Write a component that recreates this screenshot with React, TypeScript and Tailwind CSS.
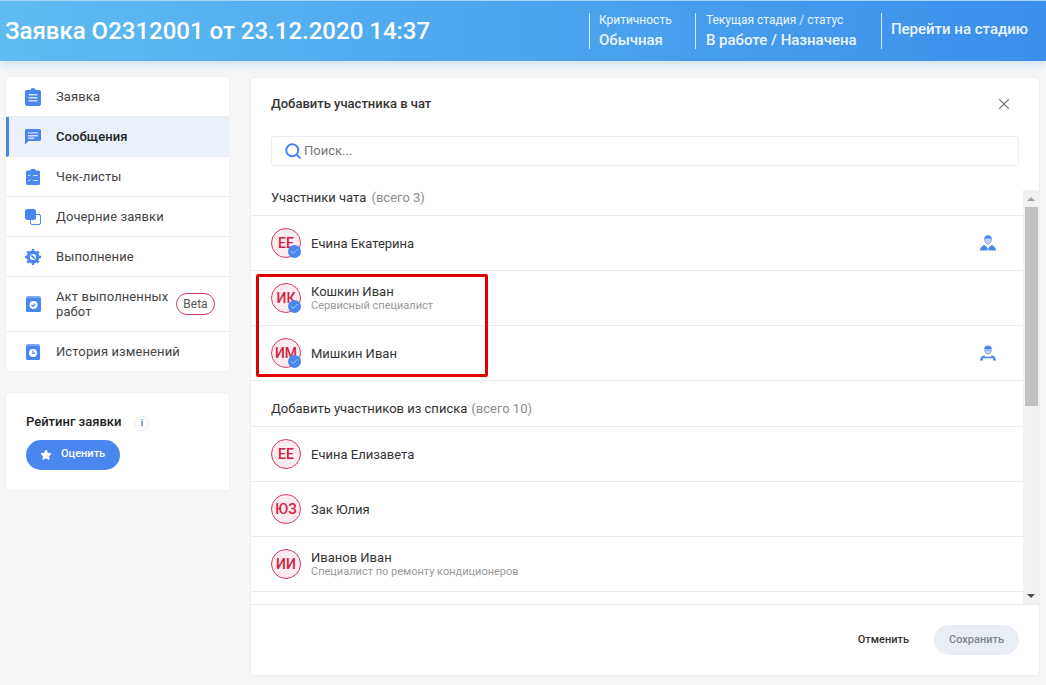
import React from 'react';
import { Search, X, Star, Check } from 'lucide-react';

const blue = '#4a86f0';

const IconClipboard = () => (
  <svg width="16" height="18" viewBox="0 0 16 18">
    <path fill="#4a86f0" d="M2 2h3.200a3 3 0 0 1 5.600 0H14a2 2 0 0 1 2 2v12a2 2 0 0 1-2 2H2a2 2 0 0 1-2-2V4a2 2 0 0 1 2-2z" />
    <path fill="#cfe0fb" d="M3.500 6h9v1.400h-9zM3.500 9h9v1.400h-9zM3.500 12h9v1.400h-9z" />
  </svg>
);
const IconChat = () => (
  <svg width="16" height="16" viewBox="0 0 16 16">
    <path fill="#4a86f0" d="M1.500 0h13A1.500 1.500 0 0 1 16 1.500v9a1.500 1.500 0 0 1-1.500 1.500H3.500L0 15.500v-14A1.500 1.500 0 0 1 1.500 0z" />
    <path fill="#cfe0fb" d="M3 3.200h10v1.400H3zM3 6h10v1.400H3zM3 8.600h6.500V10H3z" />
  </svg>
);
const IconChecklist = () => (
  <svg width="14" height="16" viewBox="0 0 14 16" className="mx-px">
    <path fill="#4a86f0" d="M1.500 1.500h3a2.500 2.500 0 0 1 5 0h3A1.500 1.500 0 0 1 14 3v11.500a1.500 1.500 0 0 1-1.500 1.500h-11A1.500 1.500 0 0 1 0 14.500V3a1.500 1.500 0 0 1 1.500-1.500z" />
    <path fill="none" stroke="#cfe0fb" strokeWidth="1" d="M2 6l1 1 1.600-1.800M7 6.500h5M2 11l1 1 1.600-1.800M7 11.500h5" />
  </svg>
);
const IconChild = () => (
  <svg width="16" height="16" viewBox="0 0 16 16">
    <rect x="5.500" y="5.500" width="10" height="10" rx="1.500" fill="none" stroke="#4a86f0" />
    <rect x="0" y="0" width="11" height="11" rx="2.500" fill="#4a86f0" />
  </svg>
);
const IconGear = () => (
  <svg width="16" height="16" viewBox="0 0 16 16">
    <circle cx="8" cy="8" r="4.800" fill="none" stroke="#4a86f0" strokeWidth="3.400" />
    <path stroke="#4a86f0" strokeWidth="2.400" d="M8 0v3M8 13v3M0 8h3M13 8h3M2.300 2.300l2.100 2.100M11.600 11.600l2.100 2.100M2.300 13.700l2.100-2.100M11.600 4.400l2.100-2.100" />
    <path stroke="#4a86f0" strokeWidth="1.800" d="M6.300 6.300l3.400 3.400" />
  </svg>
);
const IconAct = () => (
  <svg width="15" height="16" viewBox="0 0 15 16">
    <path fill="#7ba6f4" d="M2 0h11a2 2 0 0 1 2 2v3H0V2a2 2 0 0 1 2-2z" />
    <rect y="2" width="15" height="14" rx="1.500" fill="#4a86f0" />
    <circle cx="7.500" cy="9" r="4" fill="#fff" />
    <path fill="none" stroke="#4a86f0" strokeWidth="1.300" d="M5.600 9l1.400 1.400 2.400-2.600" />
  </svg>
);
const IconHistory = () => (
  <svg width="14" height="16" viewBox="0 0 14 16" className="mx-px">
    <path fill="#7ba6f4" d="M2 0h10a2 2 0 0 1 2 2v3H0V2a2 2 0 0 1 2-2z" />
    <rect y="2" width="14" height="14" rx="1.500" fill="#4a86f0" />
    <circle cx="7" cy="9" r="4" fill="#fff" />
    <path fill="none" stroke="#4a86f0" strokeWidth="1.200" d="M7 6.600V9.300h2" />
  </svg>
);
const IconManager = () => (
  <svg width="16" height="16" viewBox="0 0 16 16">
    <path fill="#4a86f0" d="M4.200 5C3.900 1.800 6 .3 8 .3s4.100 1.500 3.800 4.700c-1-1.500-2.100-2-3.800-2s-2.800.5-3.800 2z" />
    <path fill="#c3d7fa" stroke="#4a86f0" strokeWidth=".7" d="M4.800 4.600c0 2.700 1.400 4.300 3.200 4.300s3.200-1.600 3.200-4.300c-1-1-2-1.300-3.200-1.300s-2.200.3-3.200 1.300z" />
    <path fill="#4a86f0" d="M0 15.500c0-3.200 2-4.800 4.700-5.600L7.600 13v2.500zM16 15.500c0-3.200-2-4.800-4.700-5.600L8.400 13v2.500z" />
  </svg>
);
const IconWorker = () => (
  <svg width="16" height="16" viewBox="0 0 16 16">
    <path fill="#4a86f0" d="M4 4.200C4 1.800 6 .4 8 .4s4 1.400 4 3.800z" />
    <path fill="#c3d7fa" d="M3.600 4.200h8.800v.9H3.600z" />
    <path fill="#c3d7fa" stroke="#4a86f0" strokeWidth=".7" d="M4.800 5.200c0 2.200 1.400 3.700 3.200 3.700s3.200-1.500 3.200-3.700z" />
    <path fill="#4a86f0" d="M0 15.500c0-3 1.800-4.500 4.200-5.200L5 11.800h6l.8-1.500c2.400.7 4.200 2.200 4.200 5.200h-2.800v-2.200H2.800v2.200z" />
  </svg>
);

const nav = [
  { label: 'Заявка', icon: <IconClipboard /> },
  { label: 'Сообщения', icon: <IconChat />, active: true },
  { label: 'Чек-листы', icon: <IconChecklist /> },
  { label: 'Дочерние заявки', icon: <IconChild /> },
  { label: 'Выполнение', icon: <IconGear /> },
];

const Avatar = ({ text, checked }: { text: string; checked?: boolean }) => (
  <div className="relative w-[30px] h-[30px] shrink-0 rounded-full border border-[#d9395a] bg-[#fdecef] flex items-center justify-center pb-px text-[14px] font-medium leading-none text-[#d0213f]">
    {text}
    {checked && (
      <span className="absolute -right-[1px] -bottom-[1px] w-[13px] h-[13px] rounded-full bg-[#4a86f0] flex items-center justify-center">
        <Check size={9} strokeWidth={2} color="#dbe7fd" />
      </span>
    )}
  </div>
);

const Row = ({ initials, name, role, checked, icon }: { initials: string; name: string; role?: string; checked?: boolean; icon?: React.ReactNode }) => (
  <div className="h-[55px] shrink-0 border-b border-[#ececec] pl-5 pr-[27px] flex items-center">
    <Avatar text={initials} checked={checked} />
    <div className={`ml-[10px] flex-1 ${role ? '' : 'pt-px'}`}>
      <div className="text-[13px] leading-[15px] text-[#333]">{name}</div>
      {role && <div className="text-[11px] leading-[13px] text-[#9a9a9a]">{role}</div>}
    </div>
    {icon}
  </div>
);

export default function App() {
  return (
    <div className="w-[1046px] h-[685px] overflow-hidden bg-[#f7f7f7] font-['Roboto',sans-serif] text-[#333]">
      <header className="h-[61px] border-t border-[#a5d4f5] bg-gradient-to-r from-[#5fbbf1] to-[#3c8eeb] text-white flex items-center pl-[5px] pr-[18px] shadow-[0_4px_10px_rgba(130,190,235,0.35)]">
        <h1 className="flex-1 text-[24px] font-medium leading-none">Заявка О2312001 от 23.12.2020 14:37</h1>
        <div className="h-9 border-l border-white/80 pl-[9px] w-[106px]">
          <div className="text-[12px] leading-[14px] text-white/90">Критичность</div>
          <div className="text-[15px] leading-[18px] font-medium mt-[4px] text-white/90">Обычная</div>
        </div>
        <div className="h-9 border-l border-white/80 pl-[10px] w-[186px]">
          <div className="text-[12px] leading-[14px] text-white/90">Текущая стадия / статус</div>
          <div className="text-[15px] leading-[18px] font-medium mt-[4px] text-white/90">В работе / Назначена</div>
        </div>
        <div className="h-9 border-l border-white/80 pl-[9px] flex items-center">
          <span className="text-[15px] font-medium text-white/90 -mt-[3px]">Перейти на стадию</span>
        </div>
      </header>

      <div className="flex pt-4 pl-[6px] pr-[7px] gap-[22px]">
        <aside className="w-[223px] shrink-0">
          <nav className="bg-white rounded-[3px] shadow-[0_0_2px_rgba(0,0,0,0.08)]">
            {nav.map((item) => (
              <div
                key={item.label}
                className={`h-10 flex items-center border-b border-[#ececec] pl-[19px] ${item.active ? 'bg-[#eaf1fd] border-l-[3px] border-l-[#4a86f0] !pl-[16px] text-[#222]' : 'text-[#444]'}`}
              >
                <span className="w-4 flex justify-center">{item.icon}</span>
                <span className={`ml-[15px] text-[13px] tracking-[0.1px] ${item.active ? 'font-medium' : ''}`}>{item.label}</span>
              </div>
            ))}
            <div className="h-[55px] flex items-center border-b border-[#ececec] pl-[19px] text-[#444]">
              <span className="w-4 flex justify-center"><IconAct /></span>
              <span className="ml-[15px] w-[115px] text-[13px] leading-[15px] tracking-[0.1px]">Акт выполненных работ</span>
              <span className="ml-[5px] h-[22px] w-[39px] rounded-full border border-[#c9405f] flex items-center justify-center text-[12px] text-[#555]">Beta</span>
            </div>
            <div className="h-[39px] flex items-center pl-[19px] text-[#444]">
              <span className="w-4 flex justify-center"><IconHistory /></span>
              <span className="ml-[15px] text-[13px] tracking-[0.1px]">История изменений</span>
            </div>
          </nav>

          <section className="mt-[22px] h-[97px] bg-white rounded-[3px] shadow-[0_0_2px_rgba(0,0,0,0.08)] pl-5 pt-[19px]">
            <div className="flex items-center">
              <span className="text-[13px] font-medium text-[#222]">Рейтинг заявки</span>
              <span className="ml-[13px] mt-[3px] w-[15px] h-[15px] rounded-full border border-[#e6ecf4] flex items-center justify-center text-[9px] font-bold text-[#4a7cc0] leading-none">i</span>
            </div>
            <button className="mt-[8px] h-[30px] w-[94px] rounded-full bg-[#4a86f0] text-white flex items-center pl-[14px]">
              <Star size={12} fill="#fff" strokeWidth={1.5} color="#fff" />
              <span className="ml-[9px] text-[11px] font-medium">Оценить</span>
            </button>
          </section>
        </aside>

        <main className="relative w-[788px] h-[597px] mt-px bg-white rounded-[3px] shadow-[0_0_2px_rgba(0,0,0,0.12)] flex flex-col">
          <div className="h-[52px] shrink-0 pl-5 pr-[26px] flex items-center justify-between">
            <span className="text-[13px] font-medium text-[#333]">Добавить участника в чат</span>
            <X size={18} strokeWidth={1.5} color="#777" />
          </div>
          <div className="mx-5 mt-[6px] h-[30px] shrink-0 rounded-[3px] border border-[#eceef1] flex items-center pl-3">
            <Search size={18} strokeWidth={2.6} color={blue} />
            <span className="ml-[2px] text-[13px] text-[#777]">Поиск...</span>
          </div>
          <div className="mt-[24px] flex-1 min-h-0 flex">
            <div className="flex-1 min-w-0 overflow-hidden flex flex-col">
              <div className="h-[26px] shrink-0 pl-5 border-b border-[#ececec] text-[13px] leading-[15px]">
                Участники чата <span className="ml-[2px] text-[#8c8c8c]">(всего 3)</span>
              </div>
              <Row initials="ЕЕ" name="Ечина Екатерина" checked icon={<IconManager />} />
              <Row initials="ИК" name="Кошкин Иван" role="Сервисный специалист" checked />
              <Row initials="ИМ" name="Мишкин Иван" checked icon={<IconWorker />} />
              <div className="h-[46px] shrink-0 pl-5 border-b border-[#ececec] text-[13px] flex items-end pb-2">
                <span>Добавить участников из списка</span> <span className="ml-[4px] text-[#8c8c8c]">(всего 10)</span>
              </div>
              <Row initials="ЕЕ" name="Ечина Елизавета" />
              <Row initials="ЮЗ" name="Зак Юлия" />
              <Row initials="ИИ" name="Иванов Иван" role="Специалист по ремонту кондиционеров" />
            </div>
            <div className="w-4 shrink-0 bg-[#f1f1f1] flex flex-col items-center">
              <div className="h-[17px] flex items-center justify-center">
                <div className="w-0 h-0 border-x-[4px] border-x-transparent border-b-[4px] border-b-[#a3a3a3]" />
              </div>
              <div className="w-[13px] h-[199px] bg-[#c1c1c1]" />
              <div className="mt-auto h-[17px] flex items-center justify-center">
                <div className="w-0 h-0 border-x-[4px] border-x-transparent border-t-[4px] border-t-[#505050]" />
              </div>
            </div>
          </div>
          <div className="h-[71px] shrink-0 border-t border-[#ececec] flex items-center justify-end pr-5">
            <span className="text-[11px] font-medium text-[#333] mr-[25px]">Отменить</span>
            <button className="h-[30px] w-[85px] rounded-full bg-[#e9eef5] text-[11px] font-medium text-[#7f8690]">Сохранить</button>
          </div>
          <div className="absolute left-[5px] top-[196px] w-[232px] h-[103px] border-[3px] border-[#e00000] rounded-[2px]" />
        </main>
      </div>
    </div>
  );
}
